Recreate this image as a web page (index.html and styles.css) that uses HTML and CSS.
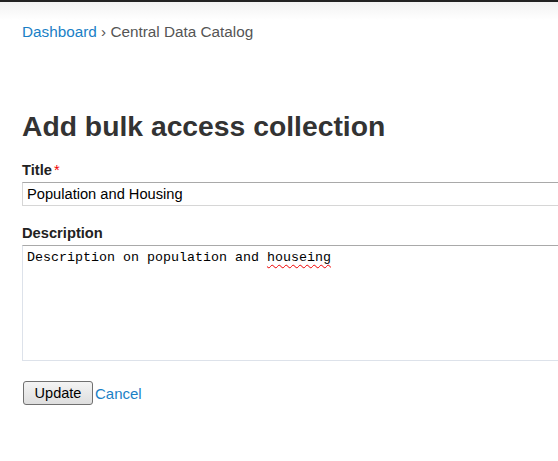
FILE: index.html
```html
<!DOCTYPE html>
<html>
<head>
<meta charset="utf-8">
<link rel="stylesheet" href="styles.css">
</head>
<body>
<div class="topbar"></div>
<div class="page">
  <div class="breadcrumb"><a href="#">Dashboard</a> › Central Data Catalog</div>
  <h1 class="title">Add bulk access collection</h1>
  <form class="form">
    <div class="field">
      <label class="label">Title<span class="req">*</span></label>
      <input class="input" type="text" value="Population and Housing">
    </div>
    <div class="field">
      <label class="label">Description</label>
      <div class="textarea">Description on population and <span class="spell">houseing</span></div>
    </div>
    <div class="actions">
      <button class="btn" type="button">Update</button><a class="cancel" href="#">Cancel</a>
    </div>
  </form>
</div>
</body>
</html>
```
FILE: styles.css
```css
html, body {
  margin: 0;
  padding: 0;
  overflow: hidden;
  background: #fff;
}
body {
  font-family: "Liberation Sans", Arial, sans-serif;
  color: #333;
}
.topbar {
  height: 2px;
  background: #222;
}
.page {
  background: linear-gradient(#f2f2f2, #fff 18px);
  padding: 20px 0 0 22px;
  width: 700px;
}
.breadcrumb {
  font-size: 15.3px;
  line-height: 20px;
  color: #555;
}
.breadcrumb a {
  color: #1a7fc6;
  text-decoration: none;
}
.title {
  margin: 67px 0 0 0;
  font-size: 28.3px;
  line-height: 34px;
  font-weight: bold;
  color: #333;
}
.form {
  margin-top: 19px;
}
.field {
  display: flex;
  flex-direction: column;
  margin-bottom: 19px;
}
.label {
  font-size: 14.7px;
  font-weight: bold;
  line-height: 16px;
  margin-bottom: 4px;
  color: #222;
}
.req {
  color: #e00;
  font-weight: normal;
  margin-left: 2px;
}
.input {
  box-sizing: border-box;
  height: 24px;
  width: 650px;
  margin: 0;
  padding: 0 4px;
  border: 1px solid #d6d6d6;
  border-top-color: #a9a9a9;
  font-family: "Liberation Sans", Arial, sans-serif;
  font-size: 14.67px;
  color: #000;
  outline: none;
}
.textarea {
  box-sizing: border-box;
  height: 116px;
  width: 650px;
  padding: 4px 4px;
  border: 1px solid #dde2ea;
  border-top-color: #a9a9a9;
  font-family: "Liberation Mono", "Courier New", monospace;
  font-size: 13.33px;
  line-height: 16px;
  color: #000;
}
.spell {
  text-decoration: underline wavy #e00;
  text-decoration-thickness: 1px;
  text-underline-offset: 3px;
}
.actions {
  margin-top: 20px;
  display: flex;
  align-items: center;
}
.btn {
  box-sizing: border-box;
  width: 70px;
  height: 24px;
  padding: 0;
  margin: 0 2px 0 1px;
  font-family: "Liberation Sans", Arial, sans-serif;
  font-size: 14.5px;
  color: #000;
  background: linear-gradient(#f4f4f4, #dedede);
  border: 1px solid #707070;
  border-radius: 3px;
}
.cancel {
  font-size: 15px;
  color: #1a7fc6;
  text-decoration: none;
}
```
